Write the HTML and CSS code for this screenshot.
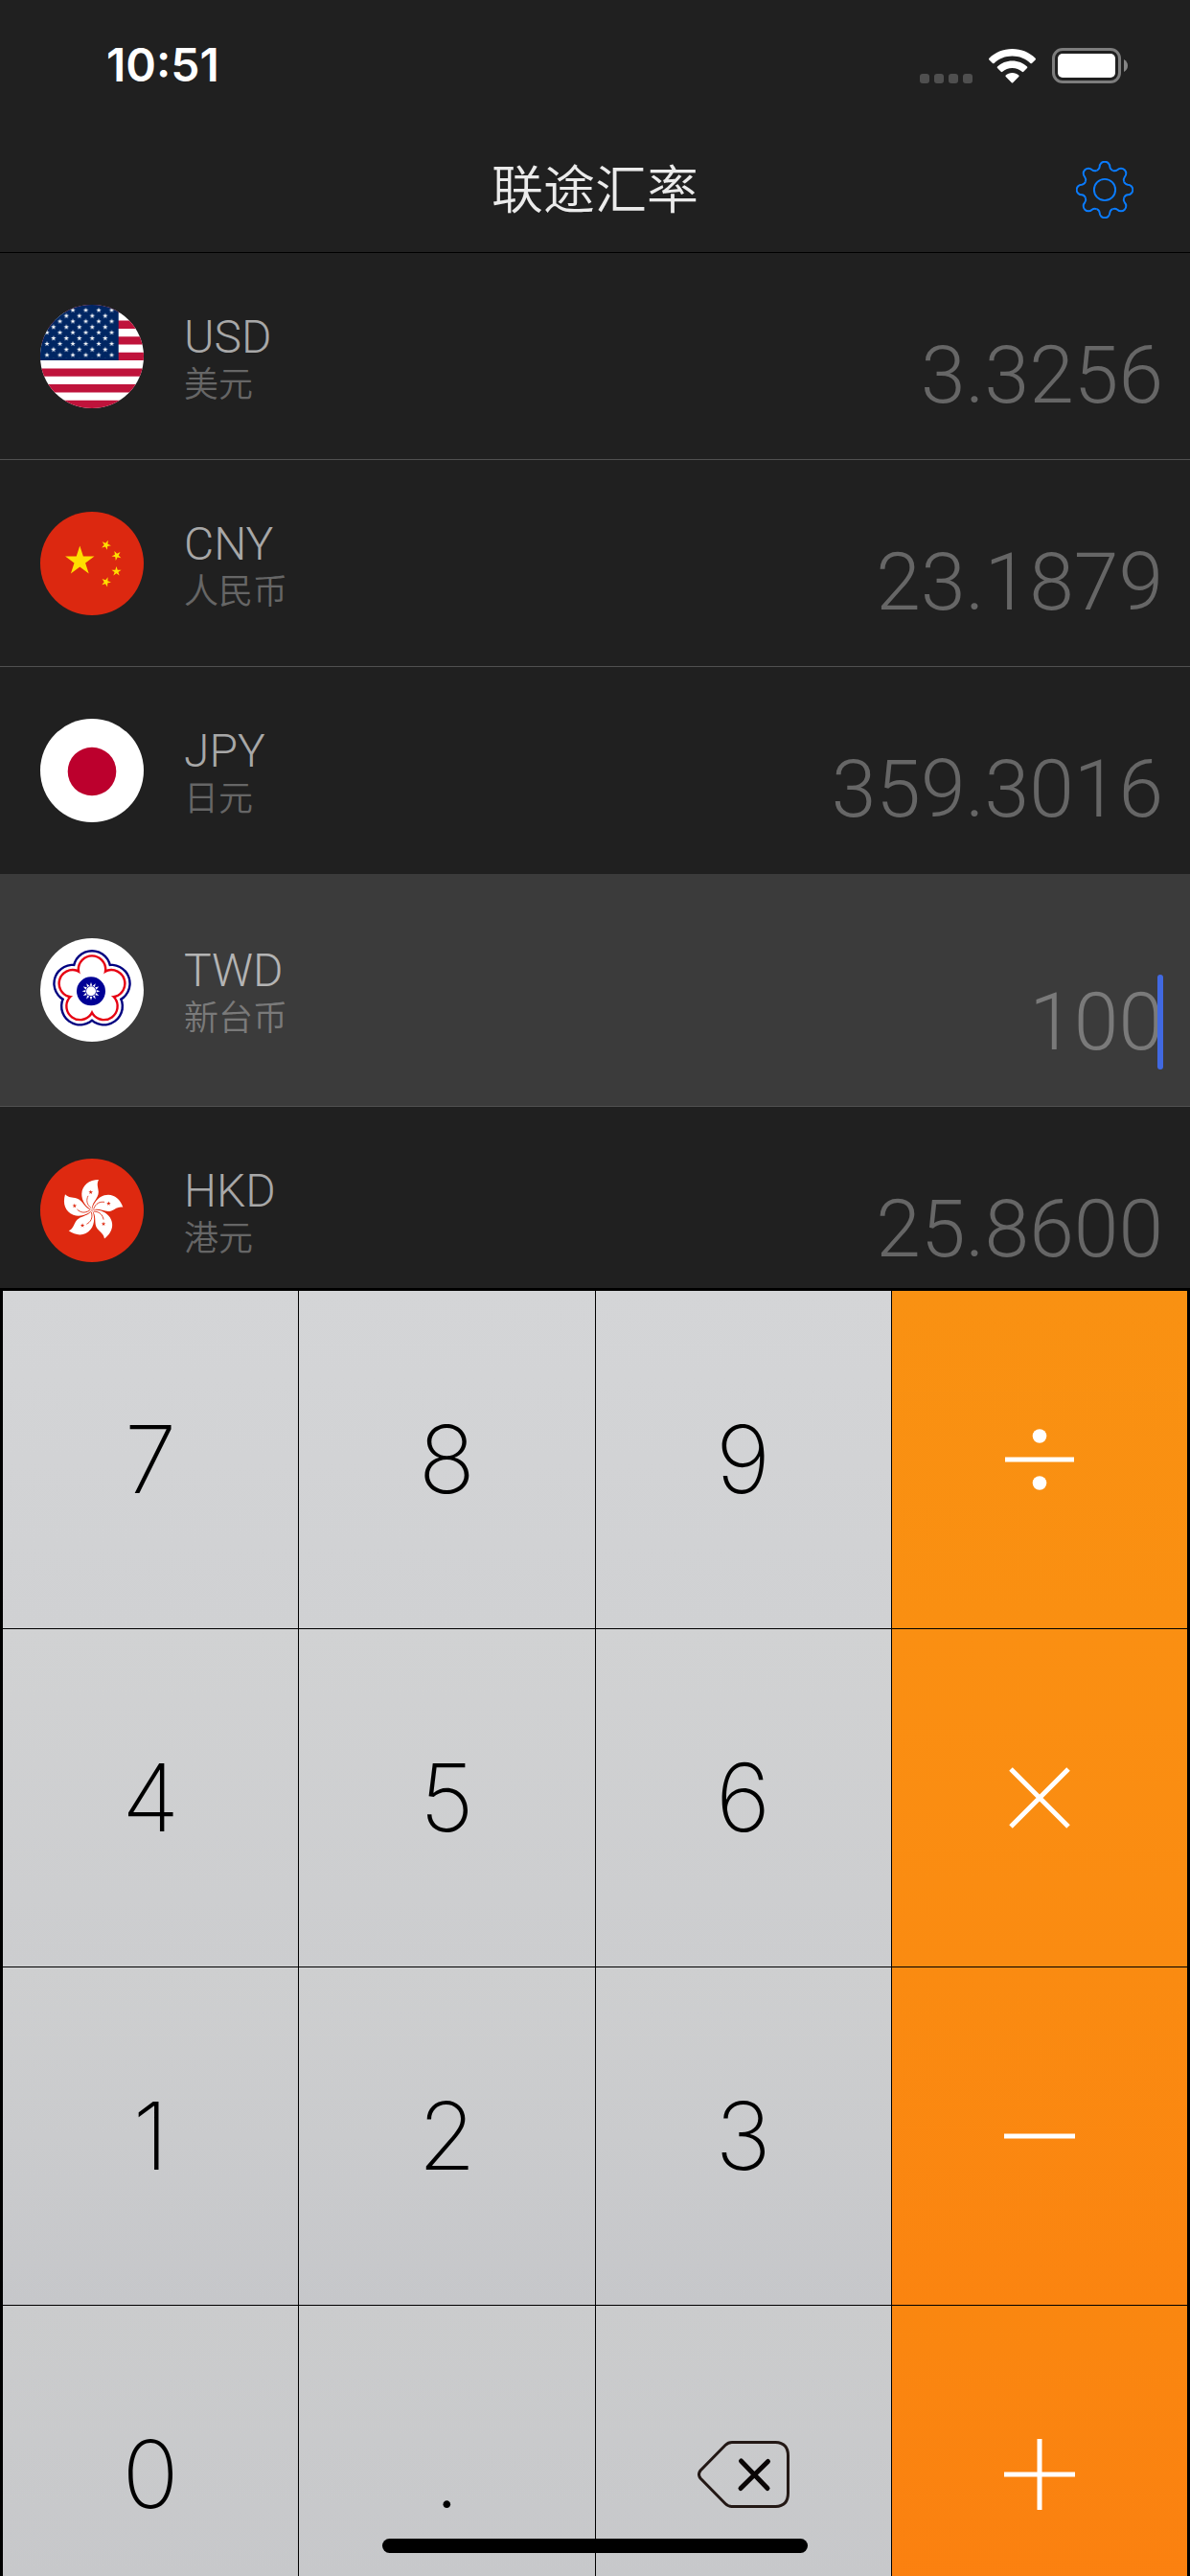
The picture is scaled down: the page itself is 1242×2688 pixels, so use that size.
FILE: index.html
```html
<!DOCTYPE html>
<html lang="zh-CN">
<head>
<meta charset="utf-8">
<meta name="viewport" content="width=device-width, initial-scale=1">
<title>联途汇率</title>
<link rel="stylesheet" href="styles.css">
</head>
<body>
<svg class="defs" aria-hidden="true">
  <defs>
    <path id="star" d="M0-1 .2245-.309 .951-.309 .363 .118 .588 .809 0 .382-.588 .809-.363 .118-.951-.309-.2245-.309Z"/>
    <pattern id="stars" x="0.3" y="-0.1" width="13.5" height="11.7" patternUnits="userSpaceOnUse">
      <g fill="#fff">
        <use href="#star" transform="translate(6.75 5.8) scale(2.9)"/>
        <use href="#star" transform="translate(0 0) scale(2.9)"/>
        <use href="#star" transform="translate(13.5 0) scale(2.9)"/>
        <use href="#star" transform="translate(0 11.7) scale(2.9)"/>
        <use href="#star" transform="translate(13.5 11.7) scale(2.9)"/>
      </g>
    </pattern>
    <clipPath id="round"><circle cx="54" cy="54" r="54"/></clipPath>
    <path id="tooth" d="M-8.6-20.8Q-5.8-22-5.5-24.8A5.5 5.5 0 0 1 5.5-24.8Q5.8-22 8.6-20.8"/>
    <g id="petal">
      <path fill="#fff" d="M0 0C-6-3-11-10-10.7-17C-10.3-26-3-31.5 7-31.7C4.5-27 6.5-24 6.8-19C7-12-1-8 0 0Z"/>
      <path fill="none" stroke="#de2910" stroke-width=".8" d="M-.6-2C-6-6-6-11-4-15"/>
      <use href="#star" fill="#de2910" transform="translate(-1.3 -18.7) scale(2.4)"/>
    </g>
    <g id="plum">
      <circle cy="-21.2"/>
      <circle cy="-21.2" transform="rotate(72)"/>
      <circle cy="-21.2" transform="rotate(144)"/>
      <circle cy="-21.2" transform="rotate(216)"/>
      <circle cy="-21.2" transform="rotate(288)"/>
    </g>
    <path id="ray" d="M-1.3-5.6 0-9.4 1.3-5.6Z"/>
  </defs>
</svg>

<div class="app">
  <header class="header">
    <div class="status">
      <time class="clock">10:51</time>
      <div class="indicators">
        <svg class="signal" viewBox="0 0 55 10" aria-hidden="true">
          <rect width="10" height="10" rx="3"/><rect x="15" width="10" height="10" rx="3"/>
          <rect x="30" width="10" height="10" rx="3"/><rect x="45" width="10" height="10" rx="3"/>
        </svg>
        <svg class="wifi" viewBox="0 0 49 36" aria-hidden="true">
          <path d="M24.500 0C34 0 42.500 3.700 48.600 9.700Q49.400 10.500 48.600 11.400L45 15Q44.200 15.700 43.400 15C38.500 10.200 31.800 7.500 24.500 7.500S10.500 10.200 5.600 15Q4.800 15.700 4 15L.4 11.400Q-.4 10.500 .4 9.700C6.500 3.700 15 0 24.500 0Z"/>
          <path d="M24.500 12.500C30.500 12.500 36 14.800 40 18.500Q40.800 19.300 40 20.100L36.300 23.800Q35.500 24.500 34.700 23.800C32 21.500 28.400 20 24.500 20S17 21.500 14.300 23.800Q13.500 24.500 12.700 23.800L9 20.100Q8.200 19.300 9 18.500C13 14.800 18.500 12.500 24.500 12.500Z"/>
          <path d="M24.500 25C27.200 25 29.600 26 31.300 27.600Q32 28.300 31.300 29L25.200 35.200Q24.500 36 23.800 35.200L17.700 29Q17 28.300 17.700 27.600C19.400 26 21.800 25 24.500 25Z"/>
        </svg>
        <svg class="battery" viewBox="0 0 79 37" aria-hidden="true">
          <rect x="1.500" y="1.500" width="69" height="34" rx="9.500" fill="none" stroke="#7d7d7d" stroke-width="3"/>
          <rect x="6" y="6" width="60" height="25" rx="5" fill="#fff"/>
          <path d="M75 12Q79 14.500 79 18.500T75 25Z" fill="#858585"/>
        </svg>
      </div>
    </div>
    <div class="navbar">
      <h1 class="title">联途汇率</h1>
      <button class="settings" type="button" aria-label="设置">
        <svg class="gear" viewBox="-31 -31 62 62" aria-hidden="true">
          <circle r="11.500"/>
          <use href="#tooth"/><use href="#tooth" transform="rotate(45)"/>
          <use href="#tooth" transform="rotate(90)"/><use href="#tooth" transform="rotate(135)"/>
          <use href="#tooth" transform="rotate(180)"/><use href="#tooth" transform="rotate(225)"/>
          <use href="#tooth" transform="rotate(270)"/><use href="#tooth" transform="rotate(315)"/>
        </svg>
      </button>
    </div>
  </header>

  <main class="rates">
    <div class="rate">
      <svg class="flag" viewBox="0 0 108 108" aria-hidden="true">
        <g clip-path="url(#round)">
          <rect width="108" height="108" fill="#fff"/>
          <path fill="#bf133b" d="M0 0H108V8.300H0ZM0 16.600H108V24.900H0ZM0 33.200H108V41.500H0ZM0 49.800H108V58.100H0ZM0 66.500H108V74.800H0ZM0 83.100H108V91.400H0ZM0 99.700H108V108H0Z"/>
          <rect width="81.700" height="58" fill="#002663"/>
          <rect x="4" y="2.900" width="74" height="52.700" fill="url(#stars)"/>
        </g>
      </svg>
      <label class="currency" for="usd"><span class="code">USD</span><span class="name">美元</span></label>
      <div class="field"><input class="amount" id="usd" type="text" inputmode="decimal" value="3.3256"></div>
    </div>

    <div class="rate">
      <svg class="flag" viewBox="0 0 108 108" aria-hidden="true">
        <circle cx="54" cy="54" r="54" fill="#dc2810"/>
        <g fill="#ffde00">
          <use href="#star" transform="translate(41.300 51.500) scale(16)"/>
          <use href="#star" transform="translate(68.700 34.700) rotate(-121) scale(5.300)"/>
          <use href="#star" transform="translate(79.700 45.700) rotate(-98) scale(5.300)"/>
          <use href="#star" transform="translate(79.500 62.300) rotate(-72) scale(5.300)"/>
          <use href="#star" transform="translate(68.700 73.300) rotate(-51) scale(5.300)"/>
        </g>
      </svg>
      <label class="currency" for="cny"><span class="code">CNY</span><span class="name">人民币</span></label>
      <div class="field"><input class="amount" id="cny" type="text" inputmode="decimal" value="23.1879"></div>
    </div>

    <div class="rate before-active">
      <svg class="flag" viewBox="0 0 108 108" aria-hidden="true">
        <circle cx="54" cy="54" r="54" fill="#fff"/>
        <circle cx="54" cy="55" r="25.300" fill="#bc002d"/>
      </svg>
      <label class="currency" for="jpy"><span class="code">JPY</span><span class="name">日元</span></label>
      <div class="field"><input class="amount" id="jpy" type="text" inputmode="decimal" value="359.3016"></div>
    </div>

    <div class="rate active">
      <svg class="flag" viewBox="0 0 108 108" aria-hidden="true">
        <circle cx="54" cy="54" r="54" fill="#fff"/>
        <g transform="translate(54 53.800)">
          <use class="plum-navy" href="#plum"/>
          <use class="plum-gap" href="#plum"/>
          <use class="plum-red" href="#plum"/>
          <use class="plum-inner" href="#plum"/>
          <circle r="14" fill="#fff"/>
        </g>
        <g transform="translate(53 55.300)">
          <circle r="15" fill="#000095"/>
          <g fill="#fff">
            <circle r="5"/>
            <use href="#ray"/><use href="#ray" transform="rotate(30)"/><use href="#ray" transform="rotate(60)"/>
            <use href="#ray" transform="rotate(90)"/><use href="#ray" transform="rotate(120)"/><use href="#ray" transform="rotate(150)"/>
            <use href="#ray" transform="rotate(180)"/><use href="#ray" transform="rotate(210)"/><use href="#ray" transform="rotate(240)"/>
            <use href="#ray" transform="rotate(270)"/><use href="#ray" transform="rotate(300)"/><use href="#ray" transform="rotate(330)"/>
          </g>
        </g>
      </svg>
      <label class="currency" for="twd"><span class="code">TWD</span><span class="name">新台币</span></label>
      <div class="field"><input class="amount" id="twd" type="text" inputmode="decimal" value="100"><span class="caret"></span></div>
    </div>

    <div class="rate">
      <svg class="flag" viewBox="0 0 108 108" aria-hidden="true">
        <circle cx="54" cy="54" r="54" fill="#de2910"/>
        <g transform="translate(54 53.800)">
          <use href="#petal"/><use href="#petal" transform="rotate(72)"/><use href="#petal" transform="rotate(144)"/>
          <use href="#petal" transform="rotate(216)"/><use href="#petal" transform="rotate(288)"/>
        </g>
      </svg>
      <label class="currency" for="hkd"><span class="code">HKD</span><span class="name">港元</span></label>
      <div class="field"><input class="amount" id="hkd" type="text" inputmode="decimal" value="25.8600"></div>
    </div>
  </main>

  <section class="keypad" aria-label="键盘">
    <button class="key shade-1" type="button">7</button>
    <button class="key shade-1" type="button">8</button>
    <button class="key shade-1" type="button">9</button>
    <button class="key op-1" type="button" aria-label="除">
      <svg class="sign" viewBox="-38 -38 76 76"><path d="M-36 0H36"/><circle cy="-24.500" r="7.300"/><circle cy="24.500" r="7.300"/></svg>
    </button>
    <button class="key shade-2" type="button">4</button>
    <button class="key shade-2" type="button">5</button>
    <button class="key shade-2" type="button">6</button>
    <button class="key op-2" type="button" aria-label="乘">
      <svg class="sign" viewBox="-38 -38 76 76"><path d="M-30-30 30 30M30-30-30 30"/></svg>
    </button>
    <button class="key shade-3" type="button">1</button>
    <button class="key shade-3" type="button">2</button>
    <button class="key shade-3" type="button">3</button>
    <button class="key op-3" type="button" aria-label="减">
      <svg class="sign" viewBox="-38 -38 76 76"><path d="M-37 0H37"/></svg>
    </button>
    <button class="key shade-4" type="button">0</button>
    <button class="key shade-4" type="button">.</button>
    <button class="key shade-4" type="button" aria-label="删除">
      <svg class="delete" viewBox="0 0 96 70" aria-hidden="true">
        <path class="delete-body" d="M36 1.500H81.500Q94.500 2 94.500 15.500V54.500Q94.500 68 81.500 68.500H36Q32 68.500 29 65.500L3 39Q0 35 3 31L29 4.500Q32 1.500 36 1.500Z"/>
        <path class="delete-x" d="M45.500 21 73 49.500M73.500 21.500 45 49.500"/>
      </svg>
    </button>
    <button class="key op-4" type="button" aria-label="加">
      <svg class="sign" viewBox="-38 -38 76 76"><path d="M-37 0H37M0-37V37"/></svg>
    </button>
  </section>
  <div class="home-indicator"></div>
</div>
</body>
</html>
```
FILE: styles.css
```css
* {
  box-sizing: border-box;
}

body {
  margin: 0;
  background: #202020;
  font-family: Roboto, "Noto Sans CJK SC", sans-serif;
}

button,
input {
  margin: 0;
  padding: 0;
  border: 0;
  background: none;
  font: inherit;
  color: inherit;
}

svg {
  display: block;
}

.defs {
  position: absolute;
  width: 0;
  height: 0;
}

.app {
  position: relative;
  display: flex;
  flex-direction: column;
  height: 100vh;
  overflow: hidden;
}

/* Header */

.header {
  flex: none;
  border-bottom: 1px solid #000;
}

.status {
  display: flex;
  align-items: center;
  justify-content: space-between;
  height: 132px;
  padding: 4px 65px 0 111px;
}

.clock {
  color: #fff;
  font-family: Inter, sans-serif;
  font-size: 48px;
  font-weight: 600;
  line-height: 56px;
}

.indicators {
  display: flex;
  align-items: flex-end;
  gap: 17px;
}

.signal {
  width: 55px;
  height: 10px;
  fill: #4f4f4f;
}

.wifi {
  width: 49px;
  height: 36px;
  fill: #fff;
}

.battery {
  width: 79px;
  height: 37px;
}

.navbar {
  display: grid;
  grid-template-columns: 1fr auto 1fr;
  align-items: center;
  height: 131px;
  padding: 0 59px;
}

.title {
  grid-column: 2;
  margin: 0;
  padding-bottom: 6px;
  color: #ebebeb;
  font-family: "Noto Sans CJK SC", sans-serif;
  font-size: 54px;
  font-weight: 350;
  line-height: 80px;
}

.settings {
  justify-self: end;
}

.gear {
  width: 60px;
  height: 60px;
  fill: none;
  stroke: #0a7cff;
  stroke-width: 2;
}

/* Rate list */

.rates {
  flex: 1;
  min-height: 0;
  overflow: hidden;
}

.rate {
  display: flex;
  align-items: center;
  gap: 42px;
  height: 216px;
  padding: 0 28px 0 42px;
  border-bottom: 1px solid #505050;
  color: #666;
}

.before-active {
  border-bottom-color: transparent;
}

.active {
  height: 243px;
  background: #3b3b3b;
  color: #7a7a7a;
}

.flag {
  flex: none;
  width: 108px;
  height: 108px;
}

/* Plum blossom outline: the same five circles at four radii */
#plum circle {
  r: var(--petal);
}

.plum-navy { --petal: 20.6px; fill: #000080; }
.plum-gap { --petal: 18.2px; fill: #fff; }
.plum-red { --petal: 15.4px; fill: #e60012; }
.plum-inner { --petal: 13px; fill: #fff; }

.currency {
  display: flex;
  flex-direction: column;
}

.code {
  color: #a8a8a8;
  font-size: 48px;
  font-weight: 300;
  line-height: 60px;
}

.active .code {
  color: #b4b4b4;
}

.name {
  font-size: 36px;
  font-weight: 350;
  line-height: 40px;
}

.field {
  position: relative;
  flex: 1;
  align-self: flex-end;
  min-width: 0;
  padding-bottom: 38px;
}

.amount {
  display: block;
  width: 100%;
  height: 99px;
  outline: 0;
  font-size: 84px;
  font-weight: 300;
  line-height: 99px;
  text-align: right;
}

.caret {
  position: absolute;
  top: 0;
  right: 0;
  width: 6px;
  height: 99px;
  border-radius: 3px;
  background: #4169e1;
}

/* Keypad */

.keypad {
  flex: none;
  display: grid;
  grid-template-columns: repeat(4, 1fr);
  grid-auto-rows: 352px;
  gap: 1px;
  height: 50vh;
  padding: 3px;
  overflow: hidden;
  background: #000;
}

.key {
  display: flex;
  align-items: center;
  justify-content: center;
  color: #000;
  font-family: Inter, sans-serif;
  font-size: 98px;
  font-weight: 200;
  line-height: 120px;
}

.shade-1 { background: linear-gradient(#d4d5d7, #d0d1d3); }
.shade-2 { background: linear-gradient(#d1d2d3, #cccdcf); }
.shade-3 { background: linear-gradient(#cecfd0, #c6c7ca); }
.shade-4 { background: linear-gradient(#cbcccd, #c6c7ca); }

.op-1 { background: linear-gradient(#f99112, #fa8f11); }
.op-2 { background: linear-gradient(#fa8f12, #fa8b11); }
.op-3 { background: linear-gradient(#fa8b11, #fb8410); }
.op-4 { background: linear-gradient(#fa8710, #fb7f10); }

.sign {
  width: 76px;
  height: 76px;
  fill: #fff;
}

.sign path {
  fill: none;
  stroke: #fff;
  stroke-width: 5;
}

.delete {
  width: 96px;
  height: 70px;
  fill: none;
}

.delete-body {
  stroke: #231815;
  stroke-width: 3;
}

.delete-x {
  stroke: #0a0606;
  stroke-width: 5;
  stroke-linecap: round;
}

.home-indicator {
  position: absolute;
  bottom: 24px;
  left: 50%;
  width: 444px;
  height: 15px;
  border-radius: 8px;
  background: #000;
  transform: translateX(-50%);
}
```
